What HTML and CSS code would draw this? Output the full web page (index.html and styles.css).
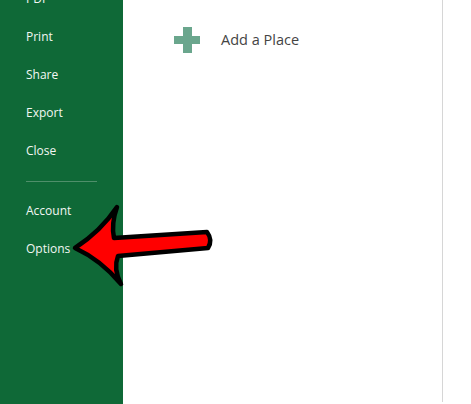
FILE: index.html
```html
<!DOCTYPE html>
<html>
	<head>
		<meta charset="utf-8">
		<title>Options</title>
		<link rel="stylesheet" href="styles.css">
	</head>
	<body>
	<div class="backstage">
		<ul class="nav">
			<li>PDF</li>
			<li>Print</li>
			<li>Share</li>
			<li>Export</li>
			<li>Close</li>
			<li class="divider"></li>
			<li>Account</li>
			<li>Options</li>
		</ul>
		<div class="main">
			<div class="place">
				<span class="plus"></span>
				<span class="place-label">Add a Place</span>
			</div>
		</div>
		<div class="gutter"></div>
	</div>
	<svg class="arrow" width="471" height="404" viewBox="0 0 471 404">
		<path d="M75,248 Q101,231 117,207 Q111,224 114,238 L207,232 Q213,240 208,248 L118,256 Q113,269 121,284 Q101,260 75,248 Z"
			fill="#ff0000" stroke="#000" stroke-width="4.5" stroke-linejoin="round"/>
	</svg>
	</body>
</html>
```

FILE: styles.css
```css
html, body {
	margin: 0;
	height: 100%;
	overflow: hidden;
}
body {
	font-family: "Open Sans", "Noto Sans", sans-serif;
	background: #fff;
}
.backstage {
	display: flex;
	height: 404px;
}
.nav {
	width: 123px;
	flex: none;
	margin: 0;
	padding: 0;
	list-style: none;
	background: #0f6937;
	color: #f2f7f3;
	font-size: 12px;
}
.nav li {
	margin: 0;
	padding-left: 26px;
	line-height: 38px;
	height: 38px;
}
.nav li:first-child {
	margin-top: -20px;
}
.nav .divider {
	height: 1px;
	margin: 11px 26px 10px 26px;
	padding: 0;
	background: #4f8f6a;
}
.main {
	flex: 1;
	box-sizing: border-box;
	border-right: 1px solid #d6d6d6;
	padding: 27px 0 0 51px;
	height: 402px;
}
.place {
	display: flex;
	align-items: center;
	gap: 21px;
}
.plus {
	position: relative;
	width: 26px;
	height: 26px;
}
.plus::before, .plus::after {
	content: "";
	position: absolute;
	background: #6aa68d;
}
.plus::before {
	left: 9px;
	top: 0;
	width: 9px;
	height: 26px;
}
.plus::after {
	left: 0;
	top: 9px;
	width: 26px;
	height: 8px;
}
.place-label {
	font-size: 14.5px;
	color: #444;
	margin-top: -2px;
}
.gutter {
	width: 28px;
	flex: none;
}
.arrow {
	position: absolute;
	left: 0;
	top: 0;
}
```
